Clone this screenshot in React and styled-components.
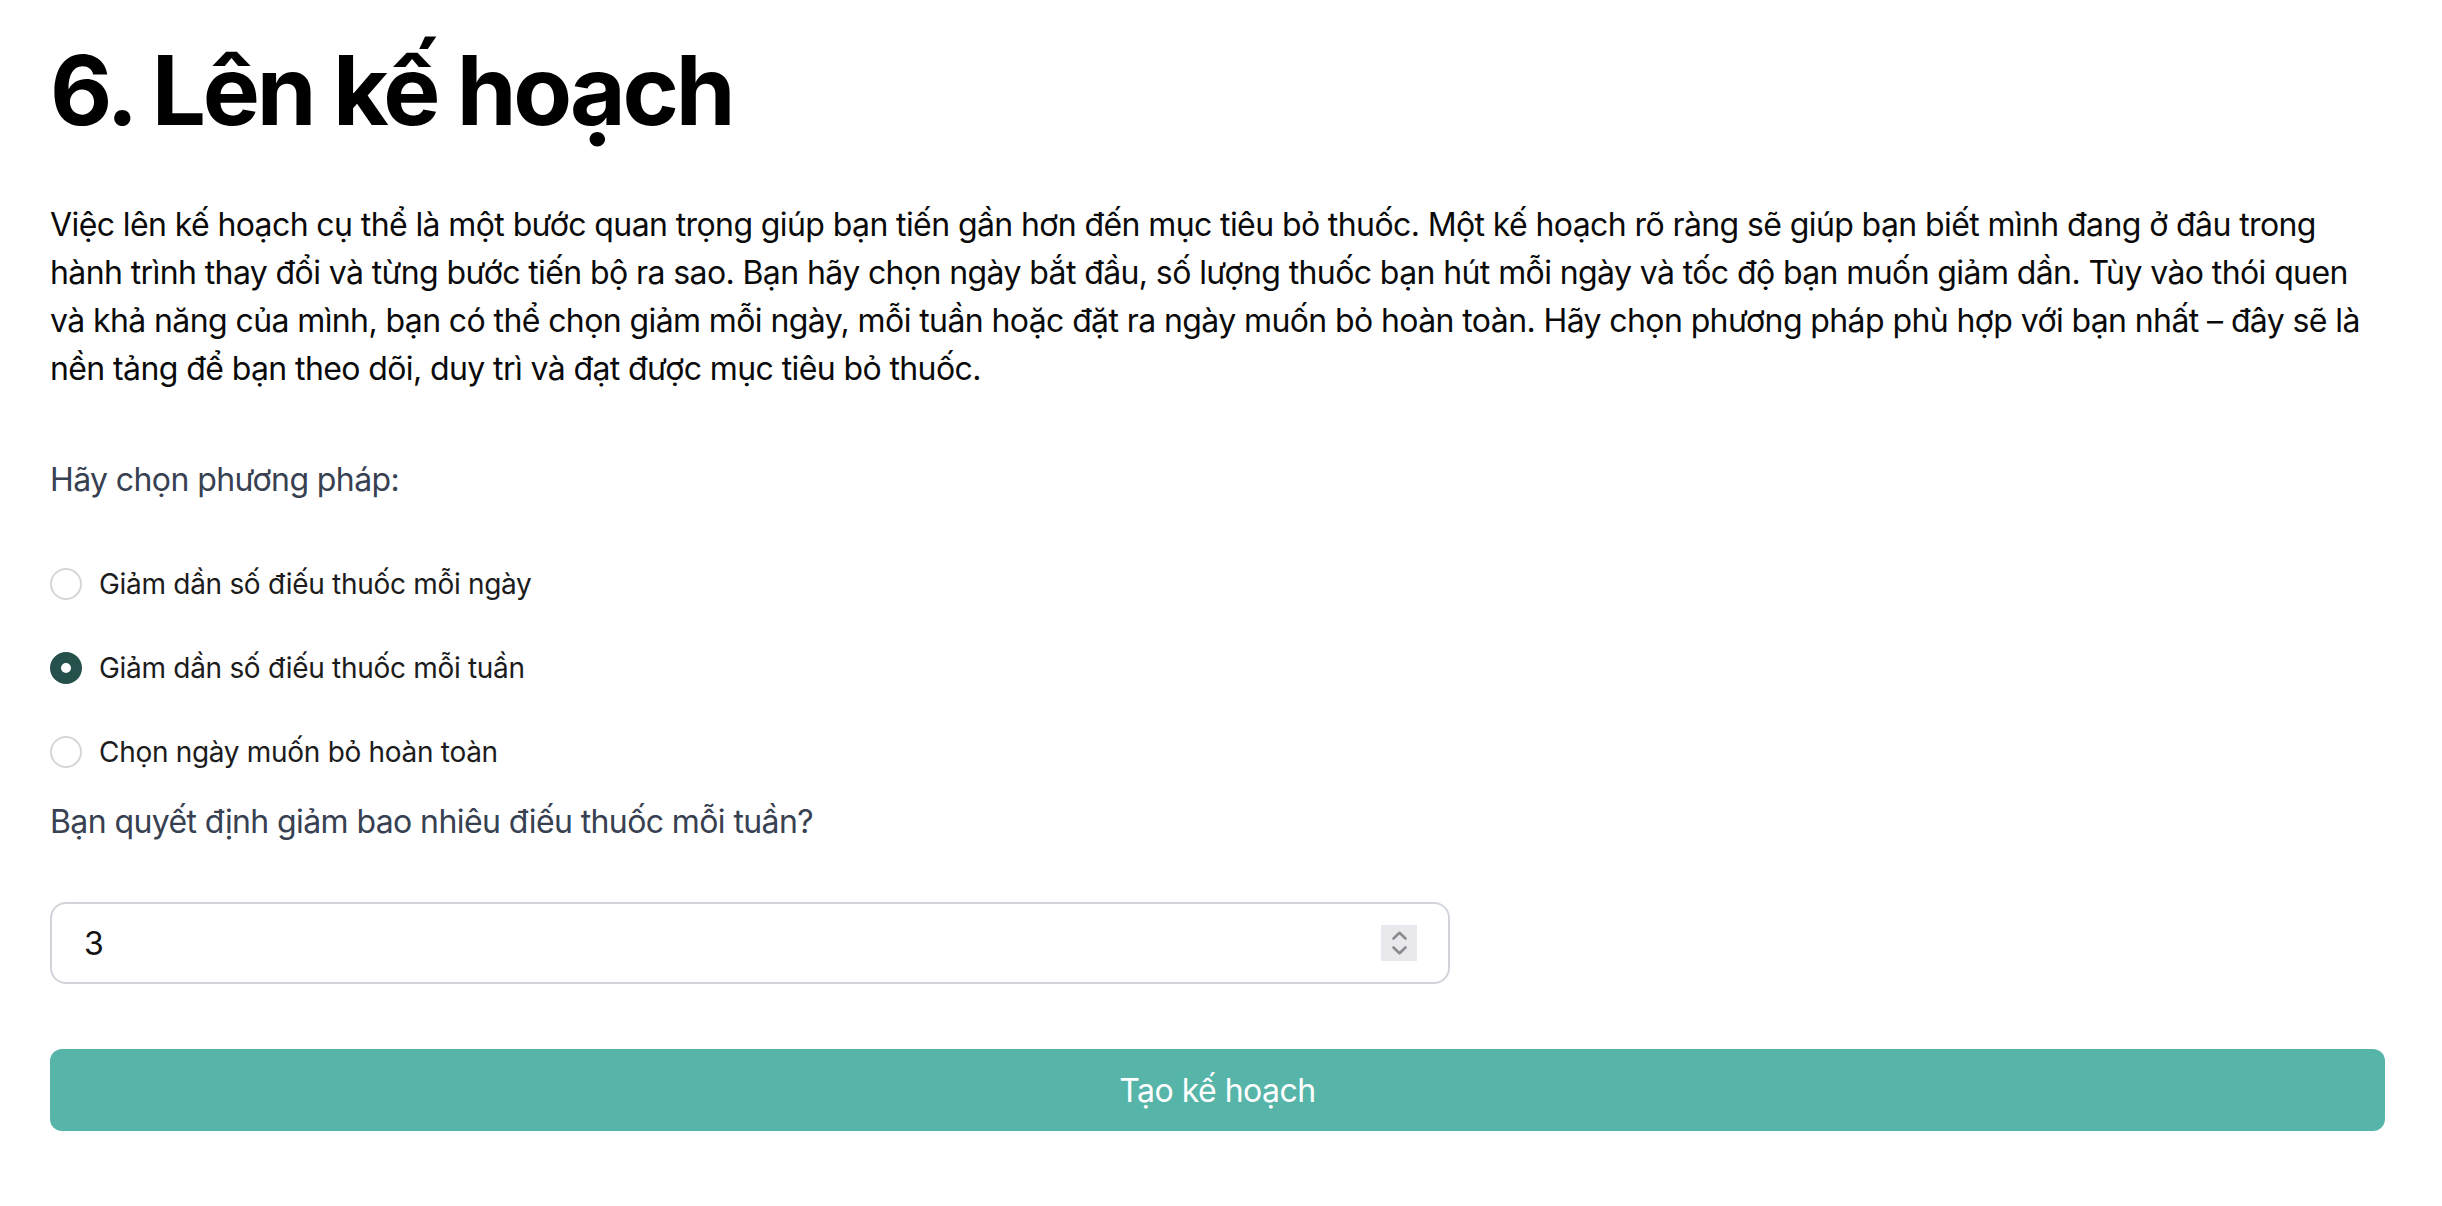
import React, { useState } from "react";
import styled, { createGlobalStyle } from "styled-components";

const GlobalStyle = createGlobalStyle`
  html, body {
    margin: 0;
    padding: 0;
    background: #ffffff;
  }
  body {
    font-family: Inter, "Noto Sans", "Liberation Sans", sans-serif;
    color: #000000;
    -webkit-font-smoothing: antialiased;
  }
  * { box-sizing: border-box; }
`;

const Page = styled.main`
  display: flex;
  flex-direction: column;
  align-items: stretch;
  padding: 42px 57px 60px 50px;
`;

const Title = styled.h1`
  margin: 0 0 63px;
  font-size: 96px;
  line-height: 96px;
  font-weight: 700;
  letter-spacing: -3.2px;
  color: #000000;
`;

const Intro = styled.p`
  margin: 0;
  font-size: 32px;
  line-height: 48px;
  font-weight: 400;
  letter-spacing: -0.6px;
  color: #0a0a0a;
`;

const FieldLabel = styled.label`
  display: block;
  margin-top: ${(p) => p.$top}px;
  font-size: 32px;
  line-height: 48px;
  letter-spacing: -0.6px;
  color: #374151;
`;

const RadioGroup = styled.div`
  display: flex;
  flex-direction: column;
  gap: 44px;
  margin-top: 60px;
`;

const RadioRow = styled.label`
  display: flex;
  align-items: center;
  gap: 17px;
  height: 40px;
  cursor: pointer;
`;

const RadioInput = styled.input.attrs({ type: "radio" })`
  appearance: none;
  -webkit-appearance: none;
  margin: 0;
  width: 32px;
  height: 32px;
  flex: 0 0 32px;
  border-radius: 50%;
  border: 2px solid #d6d6d6;
  background: #ffffff;
  cursor: pointer;

  &:checked {
    border: 11px solid #25504b;
    background: #ffffff;
  }
`;

const RadioText = styled.span`
  font-size: 28px;
  line-height: 40px;
  letter-spacing: -0.3px;
  color: #1c1c1c;
`;

const NumberField = styled.div`
  position: relative;
  width: 1400px;
  height: 82px;
  margin-top: 56px;
`;

const NumberInput = styled.input.attrs({ type: "number" })`
  width: 100%;
  height: 100%;
  margin: 0;
  padding: 0 84px 0 32px;
  border: 2px solid #d1d5db;
  border-radius: 16px;
  background: #ffffff;
  font-family: inherit;
  font-size: 32px;
  color: #111111;
  outline: none;
  -moz-appearance: textfield;

  &::-webkit-inner-spin-button,
  &::-webkit-outer-spin-button {
    -webkit-appearance: none;
    margin: 0;
  }
`;

const Spinner = styled.div`
  position: absolute;
  right: 33px;
  top: 50%;
  transform: translateY(-50%);
  width: 36px;
  height: 36px;
  background: #e9e8ed;
  display: flex;
  align-items: center;
  justify-content: center;
  pointer-events: none;
`;

const SubmitButton = styled.button`
  margin-top: 65px;
  height: 82px;
  width: 100%;
  border: none;
  border-radius: 12px;
  background: #56b5a8;
  color: #ffffff;
  font-family: inherit;
  font-size: 32px;
  font-weight: 400;
  letter-spacing: -0.5px;
  cursor: pointer;
`;

const methods = [
  "Giảm dần số điếu thuốc mỗi ngày",
  "Giảm dần số điếu thuốc mỗi tuần",
  "Chọn ngày muốn bỏ hoàn toàn",
];

export default function App() {
  const [method, setMethod] = useState(1);
  const [amount, setAmount] = useState("3");

  return (
    <>
      <GlobalStyle />
      <Page>
        <Title>6. Lên kế hoạch</Title>
        <Intro>
          Việc lên kế hoạch cụ thể là một bước quan trọng giúp bạn tiến gần hơn
          đến mục tiêu bỏ thuốc. Một kế hoạch rõ ràng sẽ giúp bạn biết mình đang
          ở đâu trong hành trình thay đổi và từng bước tiến bộ ra sao. Bạn hãy
          chọn ngày bắt đầu, số lượng thuốc bạn hút mỗi ngày và tốc độ bạn muốn
          giảm dần. Tùy vào thói quen và khả năng của mình, bạn có thể chọn giảm
          mỗi ngày, mỗi tuần hoặc đặt ra ngày muốn bỏ hoàn toàn. Hãy chọn phương
          pháp phù hợp với bạn nhất – đây sẽ là nền tảng để bạn theo dõi, duy trì
          và đạt được mục tiêu bỏ thuốc.
        </Intro>

        <FieldLabel $top={63}>Hãy chọn phương pháp:</FieldLabel>
        <RadioGroup>
          {methods.map((m, i) => (
            <RadioRow key={m}>
              <RadioInput
                name="method"
                checked={method === i}
                onChange={() => setMethod(i)}
              />
              <RadioText>{m}</RadioText>
            </RadioRow>
          ))}
        </RadioGroup>

        <FieldLabel $top={26}>
          Bạn quyết định giảm bao nhiêu điếu thuốc mỗi tuần?
        </FieldLabel>
        <NumberField>
          <NumberInput
            value={amount}
            onChange={(e) => setAmount(e.target.value)}
          />
          <Spinner>
            <svg width="36" height="36" viewBox="0 0 36 36" fill="none">
              <path
                d="M12.5 13.5 L18.5 7.8 L24.5 13.5"
                stroke="#8a8a8f"
                strokeWidth="2.6"
                strokeLinecap="round"
                strokeLinejoin="round"
              />
              <path
                d="M12.5 22.5 L18.5 28.2 L24.5 22.5"
                stroke="#8a8a8f"
                strokeWidth="2.6"
                strokeLinecap="round"
                strokeLinejoin="round"
              />
            </svg>
          </Spinner>
        </NumberField>

        <SubmitButton type="button">Tạo kế hoạch</SubmitButton>
      </Page>
    </>
  );
}
